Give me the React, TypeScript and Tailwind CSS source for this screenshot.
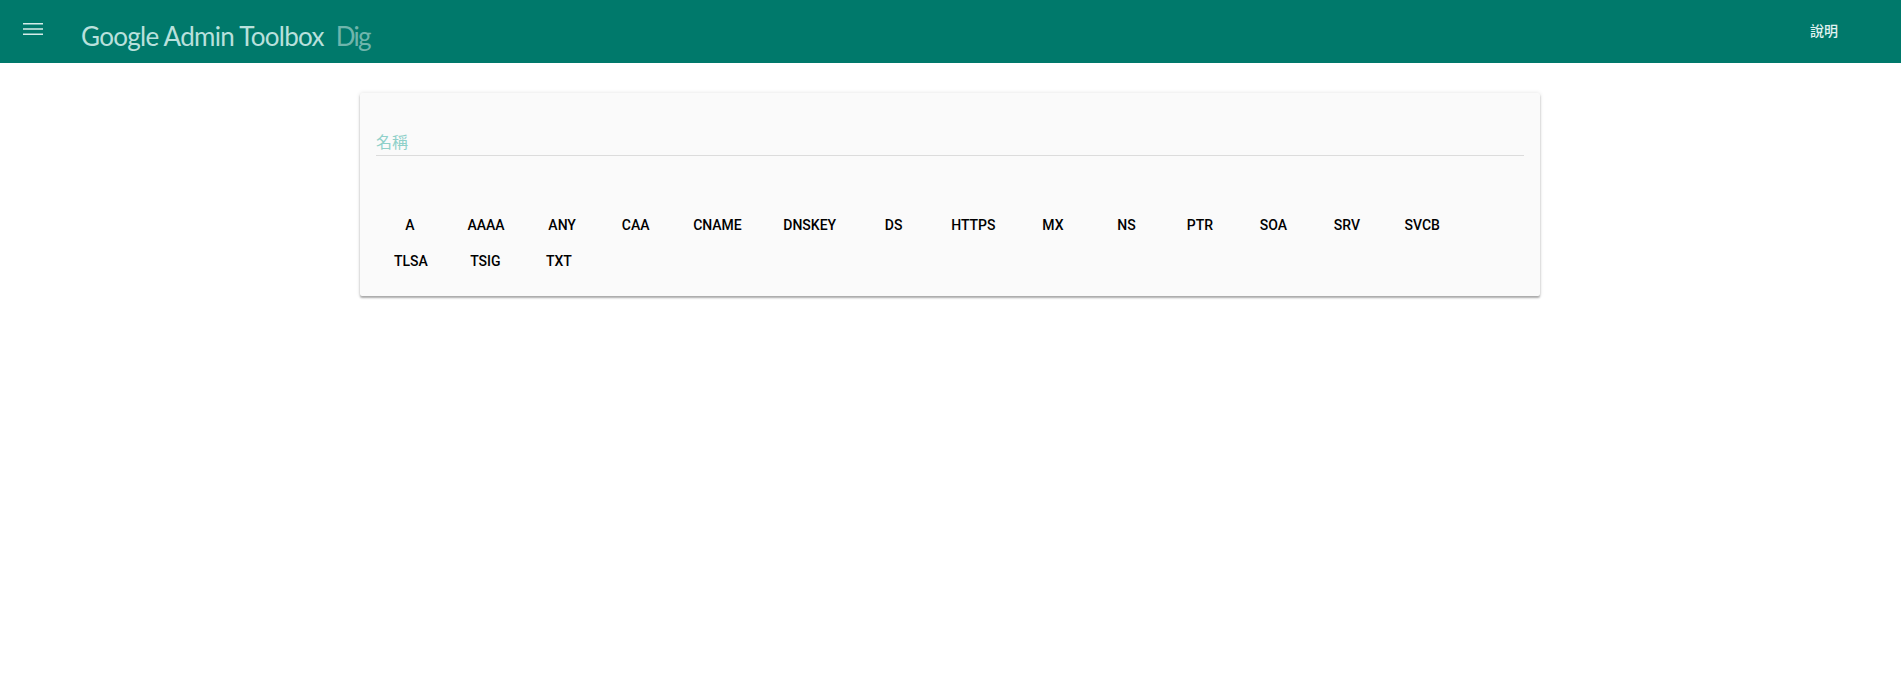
const types = ["A", "AAAA", "ANY", "CAA", "CNAME", "DNSKEY", "DS", "HTTPS", "MX", "NS", "PTR", "SOA", "SRV", "SVCB", "TLSA", "TSIG", "TXT"]

const App = () => {
    return (
        <div className="min-h-screen bg-white font-['Roboto',sans-serif]">
            <header className="h-[63px] bg-[#00796b] flex items-center">
                <button className="ml-[23px] mb-[5px] w-[20px] h-[12px] flex" aria-label="menu">
                    <svg width="20" height="12" viewBox="0 0 20 12" fill="none">
                        <path d="M0 0.75h20M0 6h20M0 11.25h20" stroke="#d5ece9" strokeWidth="1.5" />
                    </svg>
                </button>
                <h1 className="ml-[38px] text-[26px] leading-[32px] mt-[8px] font-['Lato',sans-serif] font-normal text-[#b9e0dc] tracking-[-0.7px]">Google Admin Toolbox</h1>
                <span className="ml-[12px] text-[26px] leading-[32px] mt-[8px] font-['Lato',sans-serif] text-[#6fb5ac] tracking-[-1.8px]">Dig</span>
                <button className="ml-auto mr-[63px] text-[14px] font-medium text-[#e0f2f1] font-['Roboto','Noto_Sans_CJK_TC',sans-serif]">說明</button>
            </header>
            <main className="flex justify-center pt-[30px] pr-[1px]">
                <section className="w-[1180px] h-[203px] bg-[#fafafa] rounded-[2px] pl-4 pr-4 pt-[37px] shadow-[0_2px_2px_rgba(0,0,0,0.3),0_0_4px_rgba(0,0,0,0.12)]">
                    <input
                        className="block w-full h-[26px] border-b border-[#dcdcdc] bg-transparent outline-none text-[16px] font-['Roboto','Noto_Sans_CJK_TC',sans-serif] placeholder:text-[#8fd0c9]"
                        placeholder="名稱"
                    />
                    <div className="mt-[51px] pl-[2px] flex flex-wrap gap-x-[9.5px]">
                        {types.map((t) => (
                            <button key={t} className="h-9 min-w-16 px-4 pt-[1px] text-[14px] font-medium text-black">{t}</button>
                        ))}
                    </div>
                </section>
            </main>
        </div>
    )
}

export default App
